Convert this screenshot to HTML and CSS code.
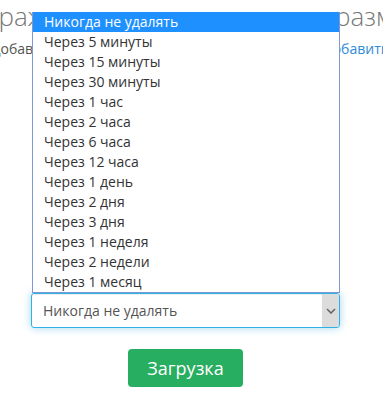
FILE: index.html
```html
<!DOCTYPE html>
<html lang="ru">
<head>
    <meta charset="UTF-8">
    <meta name="viewport" content="width=device-width, initial-scale=1.0">
    <title>Загрузка изображения</title>
    <link rel="stylesheet" href="styles.css">
</head>
<body>

<div class="upload-page">
    <h1 class="upload-title">изображение или изменить его размер</h1>
    <div class="upload-hint">
        <span class="hint-text">Добавить описание</span>
        <a class="hint-link" href="#">добавить</a>
    </div>

    <!-- Delete after -->
    <div class="form-group">
        <div class="select-box">
            <span class="select-value">Никогда не удалять</span>
            <span class="select-arrow">
                <svg width="10" height="6" viewBox="0 0 10 6"><path d="M1 1 L5 5 L9 1" fill="none" stroke="#666" stroke-width="1.6"/></svg>
            </span>
        </div>
        <ul class="select-list">
            <li class="active">Никогда не удалять</li>
            <li>Через 5 минуты</li>
            <li>Через 15 минуты</li>
            <li>Через 30 минуты</li>
            <li>Через 1 час</li>
            <li>Через 2 часа</li>
            <li>Через 6 часа</li>
            <li>Через 12 часа</li>
            <li>Через 1 день</li>
            <li>Через 2 дня</li>
            <li>Через 3 дня</li>
            <li>Через 1 неделя</li>
            <li>Через 2 недели</li>
            <li>Через 1 месяц</li>
        </ul>
    </div>

    <div class="actions">
        <button class="upload-btn">Загрузка</button>
    </div>
</div>

</body>
</html>
```

FILE: styles.css
```css
body {
    margin: 0;
    font-family: 'Open Sans', 'Noto Sans', sans-serif;
    background-color: #fff;
    overflow: hidden;
}

.upload-page {
    width: 383px;
    height: 408px;
    overflow: hidden;
}

.upload-title {
    margin: -2px 0 0 -59px;
    font-size: 26px;
    font-weight: 300;
    line-height: 36px;
    color: #777;
    white-space: nowrap;
}

.upload-hint {
    display: flex;
    justify-content: space-between;
    margin-top: 5px;
    font-size: 14px;
    line-height: 20px;
    white-space: nowrap;
}

.hint-text {
    margin-left: -9px;
    color: #555;
}

.hint-link {
    margin-right: -6px;
    color: #2e8bd8;
    text-decoration: none;
}

.form-group {
    position: relative;
    margin: 234px 0 0 31px;
    width: 309px;
}

.select-box {
    display: flex;
    align-items: center;
    height: 35px;
    border: 1px solid #2fb1e6;
    border-radius: 3px;
    box-sizing: border-box;
    box-shadow: inset 0 1px 1px rgba(0, 0, 0, 0.075), 0 0 8px rgba(102, 190, 233, 0.6);
    overflow: hidden;
}

.select-value {
    flex: 1;
    padding-left: 11px;
    font-size: 14px;
    color: #555;
}

.select-arrow {
    display: flex;
    align-items: center;
    justify-content: center;
    width: 17px;
    height: 100%;
    background-color: #dcdcdc;
}

.select-list {
    position: absolute;
    left: 1px;
    bottom: 35px;
    width: 308px;
    margin: 0;
    padding: 0;
    list-style: none;
    background-color: #fff;
    border: 1px solid #7d9ad0;
    border-top: none;
    box-sizing: border-box;
}

.select-list li {
    height: 20px;
    line-height: 20px;
    padding-left: 11px;
    font-size: 14px;
    color: #333;
}

.select-list li.active {
    background-color: #1e90ff;
    color: #fff;
}

.actions {
    display: flex;
    justify-content: center;
    margin-top: 21px;
    padding-right: 12px;
}

.upload-btn {
    width: 115px;
    height: 38px;
    background-color: #27ae60;
    color: #fff;
    border: none;
    border-radius: 4px;
    font-family: 'Open Sans', 'Noto Sans', sans-serif;
    font-size: 18px;
    cursor: pointer;
}
```
